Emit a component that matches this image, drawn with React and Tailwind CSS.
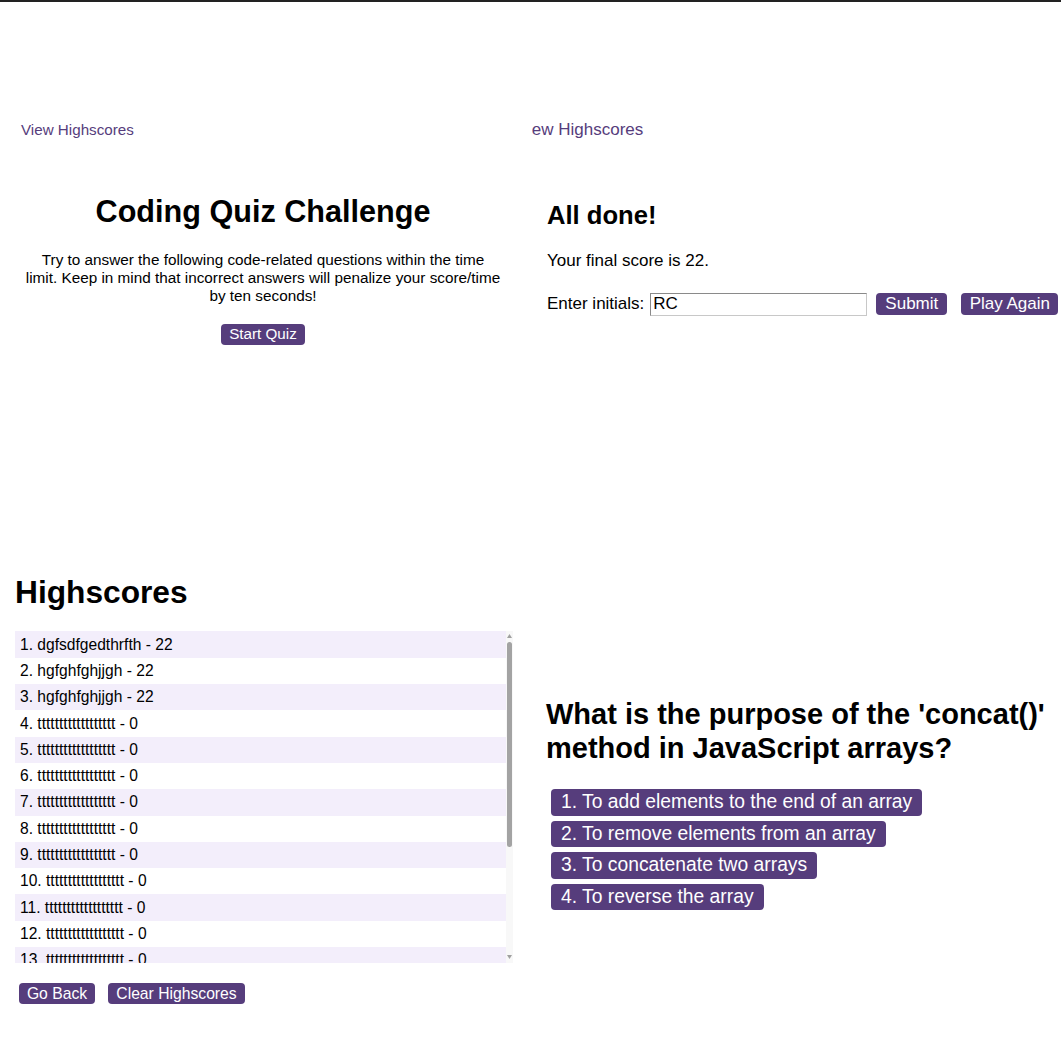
import React from "react";

const scores = [
  ["dgfsdfgedthrfth", 22],
  ["hgfghfghjjgh", 22],
  ["hgfghfghjjgh", 22],
  ...Array.from({ length: 11 }, () => ["tttttttttttttttttt", 0]),
];

const answers = [
  "1. To add elements to the end of an array",
  "2. To remove elements from an array",
  "3. To concatenate two arrays",
  "4. To reverse the array",
];

function Btn({ children, className = "" }) {
  return (
    <button
      className={`bg-[#563d7c] text-white rounded-[4px] leading-[1.15] flex items-center justify-center ${className}`}
    >
      {children}
    </button>
  );
}

export default function App() {
  return (
    <div className="w-[1061px] h-[1062px] overflow-hidden bg-white text-black border-t-2 border-[#222] font-[family-name:Liberation_Sans,Arial,sans-serif] leading-[1.15] grid grid-cols-[530px_531px] grid-rows-[538px_522px]">
      {/* start screen */}
      <section className="overflow-hidden pt-[119px]">
        <a className="block pl-[21px] text-[15.2px] text-[#563d7c]">View Highscores</a>
        <div className="w-[526px] flex flex-col items-center text-center">
          <h1 className="mt-[56px] text-[30.6px] font-bold">Coding Quiz Challenge</h1>
          <p className="mt-[21px] w-[475.5px] text-[15.3px] leading-[18px]">
            Try to answer the following code-related questions within the time limit. Keep in mind
            that incorrect answers will penalize your score/time by ten seconds!
          </p>
          <Btn className="mt-[19px] h-[21px] px-[8px] text-[15.2px]">Start Quiz</Btn>
        </div>
      </section>

      {/* end screen */}
      <section className="overflow-hidden pt-[118px]">
        <div className="ml-[2px] overflow-hidden">
          <a className="block ml-[-15px] text-[17px] text-[#563d7c] whitespace-nowrap">View Highscores</a>
        </div>
        <div className="pl-[17px]">
          <h2 className="mt-[61px] text-[25.6px] font-bold">All done!</h2>
          <p className="mt-[21px] text-[17px]">Your final score is 22.</p>
          <div className="mt-[22px] flex items-center text-[17px]">
            <span>Enter initials:</span>
            <div className="ml-[6px] w-[217px] h-[23px] border border-[#8a8a8a] border-r-[#c8c8c8] border-b-[#c8c8c8] flex items-center pl-[2px]">
              RC
            </div>
            <Btn className="ml-[9px] h-[22px] w-[71px] text-[17px]">Submit</Btn>
            <Btn className="ml-[14px] h-[22px] w-[97px] text-[17px] whitespace-nowrap">Play Again</Btn>
          </div>
        </div>
      </section>

      {/* highscores */}
      <section className="overflow-hidden pt-[34px] pl-[15px]">
        <h2 className="text-[31.7px] font-bold">Highscores</h2>
        <div className="mt-[21px] flex w-[498px] h-[332px]">
          <ol className="flex-1 overflow-hidden text-[15.6px]">
            {scores.map(([name, score], i) => (
              <li
                key={i}
                className={`h-[26.3px] shrink-0 flex items-center pl-[5px] ${i % 2 === 0 ? "bg-[#f3eefb]" : "bg-white"}`}
              >
                {i + 1}. {name} - {score}
              </li>
            ))}
          </ol>
          <div className="w-[7px] bg-[#f8f8f8] flex flex-col items-center">
            <svg width="5" height="4" viewBox="0 0 5 4" className="mt-[3px]">
              <path d="M2.5 0L5 4H0z" fill="#a0a0a0" />
            </svg>
            <div className="mt-[4px] w-[5px] h-[205px] rounded-[3px] bg-[#a3a3a3]" />
            <svg width="5" height="4" viewBox="0 0 5 4" className="mt-auto mb-[4px]">
              <path d="M0 0H5L2.5 4z" fill="#a0a0a0" />
            </svg>
          </div>
        </div>
        <div className="mt-[20px] flex gap-[13px] pl-[4px]">
          <Btn className="h-[21px] w-[76px] text-[15.7px]">Go Back</Btn>
          <Btn className="h-[21px] w-[137px] text-[15.7px]">Clear Highscores</Btn>
        </div>
      </section>

      {/* question screen */}
      <section className="overflow-hidden pt-[157px] pl-[16px]">
        <h2 className="text-[29px] font-bold leading-[34px]">
          What is the purpose of the 'concat()' method in JavaScript arrays?
        </h2>
        <div className="mt-[24px] pl-[5px] flex flex-col items-start gap-[5px]">
          {answers.map((a) => (
            <Btn key={a} className="h-[26.5px] px-[10px] text-[19.3px] whitespace-nowrap">
              {a}
            </Btn>
          ))}
        </div>
      </section>
    </div>
  );
}
